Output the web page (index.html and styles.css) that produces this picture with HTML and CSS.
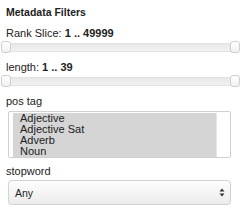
FILE: index.html
```html
<!DOCTYPE html>
<html lang="en">
<head>
    <meta charset="UTF-8">
    <title>Metadata Filters</title>
    <link rel="stylesheet" href="styles.css">
</head>
<body>
    <div class="panel">
        <div class="title">Metadata Filters</div>

        <div class="label">Rank Slice: <b>1 .. 49999</b></div>
        <div class="slider">
            <div class="track"></div>
            <span class="thumb from"></span>
            <span class="thumb to"></span>
        </div>

        <div class="label">length: <b>1 .. 39</b></div>
        <div class="slider">
            <div class="track"></div>
            <span class="thumb from"></span>
            <span class="thumb to"></span>
        </div>

        <div class="label plain">pos tag</div>
        <div class="listbox">
            <div class="options">
                <div class="option">Adjective</div>
                <div class="option">Adjective Sat</div>
                <div class="option">Adverb</div>
                <div class="option">Noun</div>
            </div>
            <div class="gutter"></div>
        </div>

        <div class="label plain last">stopword</div>
        <div class="dropdown">
            <span>Any</span>
            <svg class="arrows" width="6" height="9" viewBox="0 0 6 9">
                <path d="M3 0.5 L5.5 3.5 L0.5 3.5 Z" fill="#333"/>
                <path d="M3 8.5 L5.5 5.5 L0.5 5.5 Z" fill="#333"/>
            </svg>
        </div>
    </div>
</body>
</html>
```

FILE: styles.css
```css
body{
    margin: 0;
    background-color: #fff;
    font-family: "Liberation Sans", Arial, sans-serif;
    color: #222;
}
.panel{
    display: flex;
    flex-direction: column;
    padding: 6px 0 0 6px;
}
.title{
    font-size: 10.5px;
    font-weight: bold;
    line-height: 13px;
}
.label{
    font-size: 11px;
    line-height: 13px;
    margin-top: 8px;
}
.label b{
    font-weight: bold;
}
.label.plain{
    margin-top: 7px;
}
.label.last{
    margin-top: 7px;
}
.slider{
    position: relative;
    height: 12px;
    margin: 1px 0 0 -5px;
}
.slider + .label{
    margin-top: 8px;
}
.track{
    margin: 2px 3px 0 3px;
    height: 7px;
    border: 1px solid #e2e2e2;
    border-radius: 2px;
    background: linear-gradient(#e8e8e8, #f2f2f2);
}
.thumb{
    position: absolute;
    top: 0;
    width: 8px;
    height: 10px;
    border: 1px solid #cfcfcf;
    border-radius: 3px;
    background: linear-gradient(#fff, #f0f0f0);
}
.thumb.from{
    left: 0;
}
.thumb.to{
    right: 0;
}
.listbox{
    display: flex;
    margin: 3px 9px 0 2px;
    height: 44px;
    border: 1px solid #d0d0d0;
    border-radius: 2px;
    padding: 1px 0 0 4px;
}
.options{
    flex: 1;
}
.option{
    background-color: #d5d5d5;
    font-size: 11px;
    line-height: 11px;
    padding-left: 7px;
}
.gutter{
    width: 13px;
    border-left: 1px solid #e6e6e6;
}
.dropdown{
    display: flex;
    align-items: center;
    justify-content: space-between;
    margin: 2px 9px 0 2px;
    height: 23px;
    padding: 0 5px 0 6px;
    border: 1px solid #d2d2d2;
    border-radius: 4px;
    background: linear-gradient(#fdfdfd, #ececec);
    box-shadow: 0 1px 1px rgba(0, 0, 0, 0.08);
    font-size: 10.5px;
}
.arrows{
    display: block;
}
```
